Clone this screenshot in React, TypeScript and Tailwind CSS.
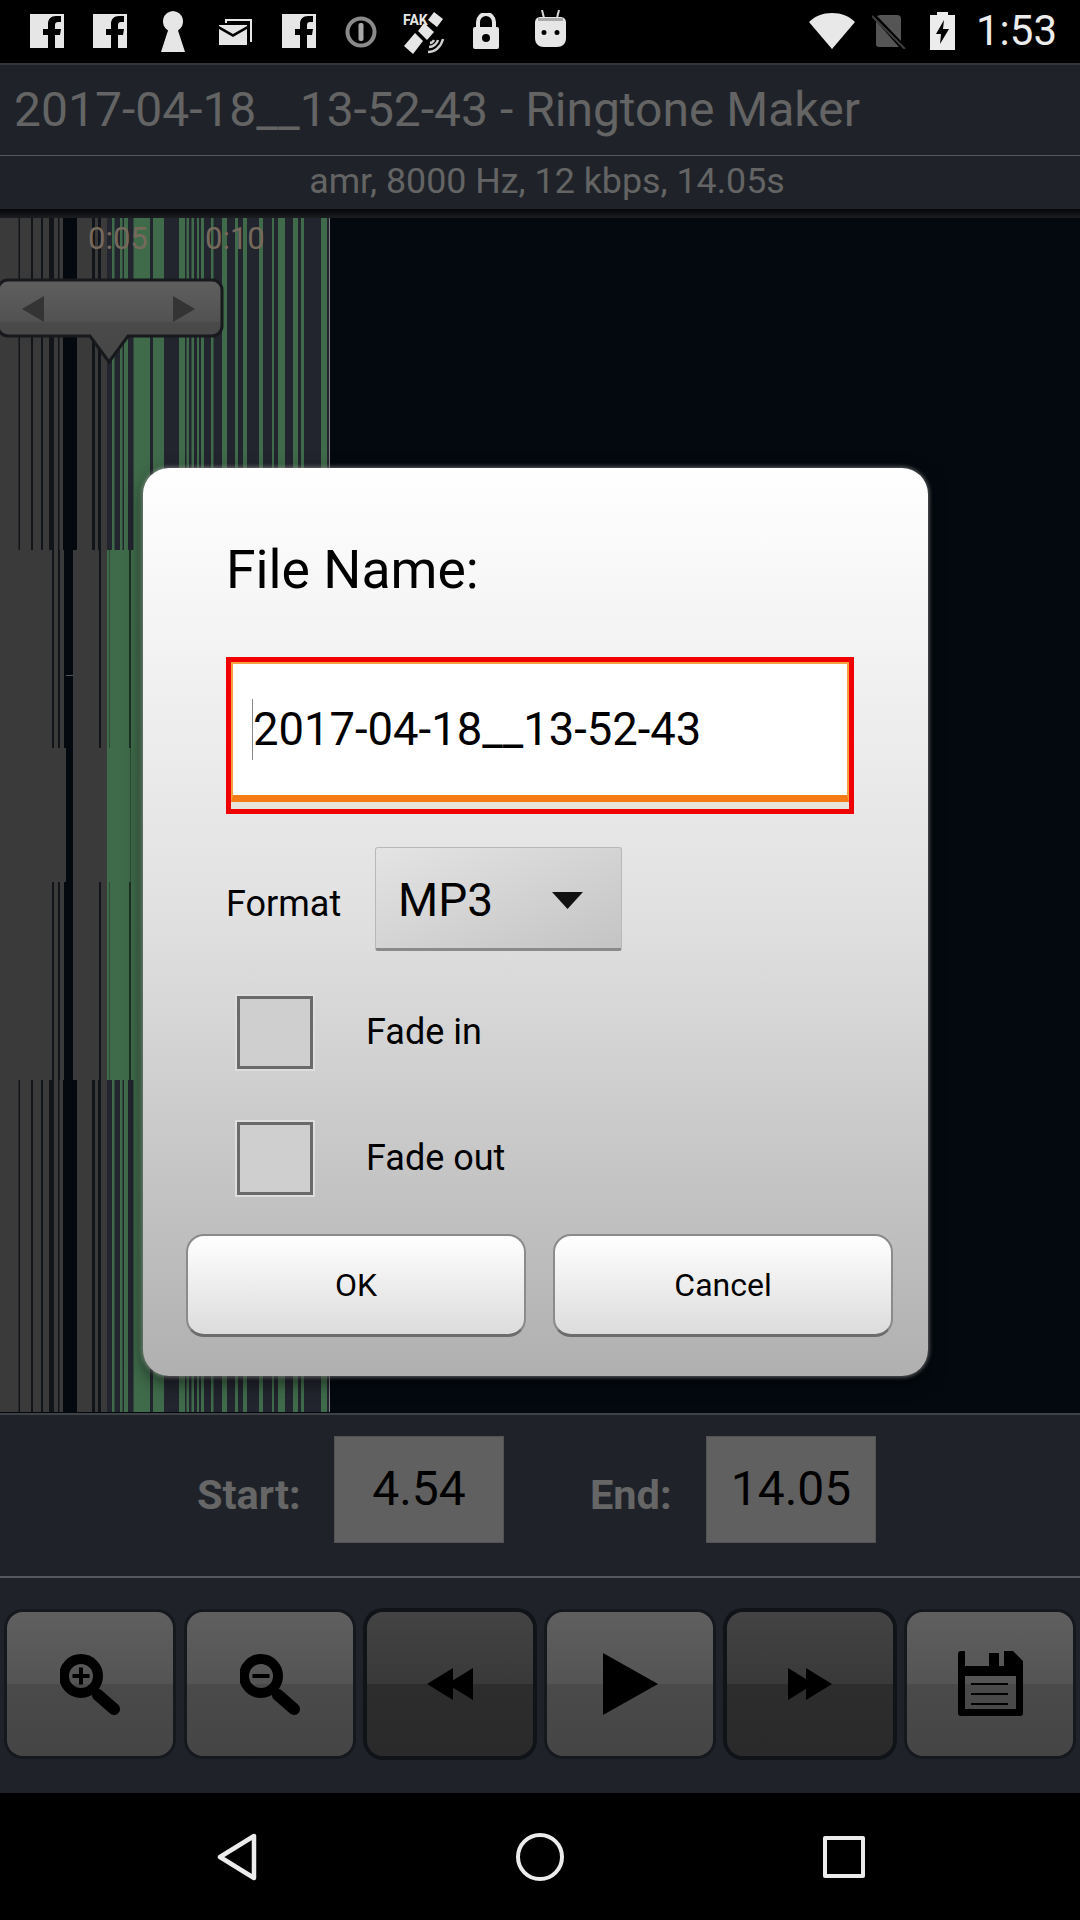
import React from 'react';

const GREY = '#3a3a3a';
const GREEN = '#3f6b4a';
const NAVY = '#22242e';
const DARK = '#111418';
const BLACK = '#03090f';

// x ranges of the wave form, in page pixels
const fullDark = [[18.5, 20], [31, 33], [41, 43], [49, 54], [58, 59.5], [92, 95], [98, 101]];
const fullGreen = [
  [112, 114.5], [120, 122.5], [124, 128], [133.5, 150], [153, 164], [179, 185], [186.5, 189],
  [191.5, 194], [197, 199], [201, 204], [211, 213.5], [222, 227], [235, 238], [243, 247],
  [259, 263], [272, 274], [278, 285], [293, 298], [301, 304], [321, 327],
];
const midDark = [[52, 54], [58, 60], [99, 101]];

const Waveform = () => (
  <svg width="330" height="1194" viewBox="0 0 330 1194" className="block">
    {/* loud top and bottom bands */}
    {[[0, 332], [862, 332]].map(([y, h]) => (
      <g key={y}>
        <rect x="0" y={y} width="107" height={h} fill={GREY} />
        <rect x="63" y={y} width="14" height={h} fill={BLACK} />
        {fullDark.map(([a, b]) => (
          <rect key={a} x={a} y={y} width={b - a} height={h} fill={DARK} />
        ))}
        <rect x="107" y={y} width="222" height={h} fill={NAVY} />
        {fullGreen.map(([a, b]) => (
          <rect key={a} x={a} y={y} width={b - a} height={h} fill={GREEN} />
        ))}
        <rect x="329" y={y} width="1" height={h} fill="#7d7d7d" />
      </g>
    ))}
    {/* quieter middle bands */}
    {[[332, 198], [664, 198]].map(([y, h]) => (
      <g key={y}>
        <rect x="0" y={y} width="107" height={h} fill={GREY} />
        <rect x="64" y={y} width="9" height={h} fill={BLACK} />
        {midDark.map(([a, b]) => (
          <rect key={a} x={a} y={y} width={b - a} height={h} fill={DARK} />
        ))}
        <rect x="107" y={y} width="40" height={h} fill={GREEN} />
        <rect x="109" y={y} width="1" height={h} fill="#2b4a35" />
        <rect x="129" y={y} width="2" height={h} fill="#1d2f24" />
      </g>
    ))}
    <rect x="0" y="530" width="107" height="134" fill={GREY} />
    <rect x="66" y="530" width="7" height="134" fill={BLACK} />
    <rect x="66" y="457" width="7" height="1" fill="#4a5a5a" />
    <rect x="107" y="530" width="40" height="134" fill={GREEN} />
    <rect x="130" y="530" width="1" height="134" fill="#2b4a35" />
  </svg>
);

const SeekHandle = () => (
  <svg width="226" height="86" viewBox="0 0 226 86" className="absolute left-0 top-[60px]">
    <defs>
      <linearGradient id="handle" x1="0" y1="0" x2="0" y2="1">
        <stop offset="0" stopColor="#5f5f5f" />
        <stop offset="0.5" stopColor="#525252" />
        <stop offset="0.52" stopColor="#4a4a4a" />
        <stop offset="1" stopColor="#464646" />
      </linearGradient>
    </defs>
    <path
      d="M8 2H212a10 10 0 0 1 10 10V48a10 10 0 0 1-10 10H128L109 84 90 58H8A10 10 0 0 1-2 48V12A10 10 0 0 1 8 2Z"
      fill="url(#handle)"
      stroke="#17191d"
      strokeWidth="3"
    />
    <path d="M44 18V44L22 31Z" fill="#343434" />
    <path d="M173 18V44L195 31Z" fill="#343434" />
  </svg>
);

const FbIcon = ({ className }: { className: string }) => (
  <svg width="34" height="34" viewBox="0 0 34 34" className={className}>
    <path d="M0 0H34V34H25V21H30L31 15H25V11C25 9 26 8 28 8H31V2H26C21 2 18 5 18 10V15H13V21H18V34H0Z" fill="#e6e6e6" />
  </svg>
);

const StatusIcons = () => (
  <div className="flex items-start">
    <FbIcon className="ml-[30px] mt-[14px]" />
    <FbIcon className="ml-[29px] mt-[14px]" />
    {/* keyhole */}
    <svg width="24" height="41" viewBox="0 0 24 41" className="ml-[34px] mt-[11px]">
      <path d="M12 0A10.5 10.5 0 0 1 17 19.5L24 41H0L7 19.5A10.5 10.5 0 0 1 12 0Z" fill="#e6e6e6" />
    </svg>
    {/* mail */}
    <svg width="34" height="28" viewBox="0 0 34 28" className="ml-[34px] mt-[18px]">
      <path d="M6 5V1H33V24H31V3H8V5Z" fill="#e6e6e6" />
      <path d="M0 7H28V8L14 16 0 8ZM0 11L14 19 28 11V27H0Z" fill="#e6e6e6" />
    </svg>
    <FbIcon className="ml-[29px] mt-[14px]" />
    {/* circled i */}
    <svg width="32" height="32" viewBox="0 0 32 32" className="ml-[29px] mt-[16px]">
      <circle cx="16" cy="16" r="13.5" fill="none" stroke="#8a8a8a" strokeWidth="4" />
      <rect x="13.5" y="7" width="5" height="18" rx="2" fill="#a8a8a8" />
    </svg>
    {/* fake gps satellite */}
    <div className="relative ml-[26px] mt-[11px] w-[43px] h-[44px]">
      <svg width="43" height="44" viewBox="0 0 43 44" className="absolute inset-0">
        <path d="M31 1L40 8 34 16 25 9Z" fill="#e6e6e6" />
        <path d="M21 12L31 21 24 29 15 20Z" fill="#e6e6e6" />
        <path d="M12 22L20 30 10 43 1 35Z" fill="#e6e6e6" />
        <path d="M25 41C32 41 38 36 40 28M26 36C30 36 34 33 35 29M27 32C29 32 30 31 31 29" fill="none" stroke="#cfcfcf" strokeWidth="2.4" />
      </svg>
      <span className="absolute left-0 top-[1px] text-[14px] leading-[16px] font-bold text-[#e6e6e6]">FAK</span>
    </div>
    {/* lock */}
    <svg width="26" height="36" viewBox="0 0 26 36" className="ml-[27px] mt-[13px]">
      <path d="M5 15V9A8 8 0 0 1 21 9V15" fill="none" stroke="#e6e6e6" strokeWidth="4" />
      <path fillRule="evenodd" d="M2 14H24A2 2 0 0 1 26 16V34A2 2 0 0 1 24 36H2A2 2 0 0 1 0 34V16A2 2 0 0 1 2 14ZM13 21A4 4 0 1 0 13 29 4 4 0 1 0 13 21Z" fill="#e6e6e6" />
    </svg>
    {/* android o */}
    <svg width="31" height="37" viewBox="0 0 31 37" className="ml-[36px] mt-[10px]">
      <path d="M7 0L9 8M24 0L22 8" stroke="#d8d8d8" strokeWidth="2" />
      <path fillRule="evenodd" d="M6 7H25C29 7 31 9 31 13V28C31 34 27 37 22 37H9C4 37 0 34 0 28V13C0 9 2 7 6 7ZM9 20A2.5 2.5 0 1 0 9 25 2.5 2.5 0 1 0 9 20ZM22 20A2.5 2.5 0 1 0 22 25 2.5 2.5 0 1 0 22 20Z" fill="#e6e6e6" />
      <rect x="3" y="8" width="25" height="3" fill="#a8a8a8" />
    </svg>
    <div className="ml-auto flex items-start">
      {/* wifi */}
      <svg width="46" height="36" viewBox="0 0 46 36" className="mt-[13px]">
        <path d="M23 36L0 9C6 3 14 0 23 0S40 3 46 9Z" fill="#e8e8e8" />
      </svg>
      {/* no sim */}
      <svg width="34" height="34" viewBox="0 0 34 34" className="ml-[17px] mt-[15px]">
        <path d="M8 0H25A4 4 0 0 1 29 4V26L5 1Z" fill="#555555" />
        <path d="M4 6L27 32H7A3 3 0 0 1 4 29Z" fill="#555555" />
        <path d="M0 1L33 34" stroke="#3f3f3f" strokeWidth="2" />
      </svg>
      {/* charging battery */}
      <svg width="25" height="38" viewBox="0 0 25 38" className="ml-[24px] mt-[12px]">
        <path fillRule="evenodd" d="M7 0H18V3H25V38H0V3H7ZM14 8L6 22H11L10 32 19 17H13Z" fill="#ececec" />
      </svg>
      <span className="ml-[21px] mr-[23px] mt-[6px] text-[42px] leading-[50px] font-normal text-[#ececec]">1:53</span>
    </div>
  </div>
);

const Checkbox = () => (
  <div className="w-[80px] h-[77px] ml-[7px] border-2 border-[#dedede] bg-[#cfcfcf] shrink-0">
    <div className="w-full h-full border-[3px] border-[#6a6a6a]" />
  </div>
);

const Dialog = () => (
  <div className="absolute left-[143px] top-[468px] w-[785px] h-[908px] rounded-[26px] bg-linear-to-b from-[#ffffff] via-[#e0e0e0] to-[#b0b0b0] shadow-[0_0_4px_1px_rgba(170,170,170,0.6),0_6px_18px_rgba(0,0,0,0.6)] text-black flex flex-col">
    <div className="ml-[83px] mt-[72px] text-[53.5px] leading-[60px]">File Name:</div>
    {/* focused text field */}
    <div className="ml-[83px] mt-[57px] w-[628px] h-[157px] border-[5px] border-[#f00000] bg-[#e8e4dc] shrink-0">
      <div className="h-[140px] bg-white border-t-2 border-x-2 border-[#f5a040] border-b-[7px] border-b-[#f57c14] flex items-center">
        <div className="ml-[19px] w-[1px] h-[61px] bg-[#8a8a8a] shrink-0" />
        <span className="text-[45.4px] leading-[60px]">2017-04-18__13-52-43</span>
      </div>
    </div>
    <div className="flex items-center ml-[83px] mt-[33px]">
      <span className="w-[112px] text-[36px] leading-[44px] mt-[10px] mr-[37px]">Format</span>
      <div className="w-[247px] h-[104px] flex items-center justify-between pl-[22px] pr-[38px] rounded-[3px] border border-[#b8b8b8] border-b-[3px] border-b-[#8a8a8a] bg-linear-to-br from-[#e4e4e4] to-[#c4c4c4]">
        <span className="text-[46px] leading-[56px] mt-[4px]">MP3</span>
        <svg width="31" height="17" viewBox="0 0 31 17" className="mt-[4px]">
          <path d="M0 0H31L15.5 17Z" fill="#111" />
        </svg>
      </div>
    </div>
    <div className="flex items-center ml-[85px] mt-[43px]">
      <Checkbox />
      <span className="ml-[51px] text-[36px] leading-[44px] -mt-[2px]">Fade in</span>
    </div>
    <div className="flex items-center ml-[85px] mt-[49px]">
      <Checkbox />
      <span className="ml-[51px] text-[36px] leading-[44px] -mt-[2px]">Fade out</span>
    </div>
    <div className="flex ml-[43px] mt-[37px] gap-[27px]">
      {['OK', 'Cancel'].map((label) => (
        <button
          key={label}
          className="w-[340px] h-[103px] rounded-[18px] border-2 border-[#8b8b8b] border-b-[3px] border-b-[#6c6c6c] bg-linear-to-b from-[#ffffff] to-[#dcdcdc] text-[32px] text-black"
        >
          {label}
        </button>
      ))}
    </div>
  </div>
);

const ZoomIcon = ({ minus }: { minus?: boolean }) => (
  <svg width="60" height="64" viewBox="0 0 60 64">
    <circle cx="21" cy="24" r="17" fill="none" stroke="#000" strokeWidth="10" />
    <path d="M32 35L39 43" stroke="#000" strokeWidth="5" />
    <path d="M38 43L54 57" stroke="#000" strokeWidth="12" strokeLinecap="round" />
    <path d={minus ? 'M12.5 24H29.5' : 'M12.5 24H29.5M21 15.5V32.5'} stroke="#000" strokeWidth="4" />
  </svg>
);

const transport = [
  { id: 'in', dark: false, icon: <ZoomIcon /> },
  { id: 'out', dark: false, icon: <ZoomIcon minus /> },
  {
    id: 'rew',
    dark: true,
    icon: (
      <svg width="46" height="32" viewBox="0 0 46 32">
        <path d="M0 16L26 0V32ZM20 16L46 0V32Z" fill="#000" />
      </svg>
    ),
  },
  {
    id: 'play',
    dark: false,
    icon: (
      <svg width="55" height="62" viewBox="0 0 55 62">
        <path d="M0 0L55 31 0 62Z" fill="#000" />
      </svg>
    ),
  },
  {
    id: 'ff',
    dark: true,
    icon: (
      <svg width="44" height="32" viewBox="0 0 44 32">
        <path d="M0 0L26 16 0 32ZM18 0L44 16 18 32Z" fill="#000" />
      </svg>
    ),
  },
  {
    id: 'save',
    dark: false,
    icon: (
      <svg width="65" height="66" viewBox="0 0 65 66">
        <path
          fillRule="evenodd"
          d="M3 0H7V15H31V2H41V15H46V0H55L65 10V62A3 3 0 0 1 62 65H3A3 3 0 0 1 0 62V3A3 3 0 0 1 3 0ZM7 25V58H58V25Z"
          fill="#000"
        />
        <path d="M13 33H50M13 43H50M13 53H50" stroke="#000" strokeWidth="2" />
      </svg>
    ),
  },
];

export default function App() {
  return (
    <div className="relative w-[1080px] h-[1920px] overflow-hidden bg-black flex flex-col font-['Roboto',sans-serif]">
      <div className="h-[63px] shrink-0">
        <StatusIcons />
      </div>

      {/* title */}
      <div className="h-[93px] shrink-0 bg-[#1f2329] border-t-2 border-t-[#33363b] border-b border-b-[#55585c] pl-[14px] flex items-center">
        <span className="text-[48px] leading-[56px] text-[#646464]">2017-04-18__13-52-43 - Ringtone Maker</span>
      </div>
      <div className="h-[53px] shrink-0 bg-[#1f2329] flex items-center justify-center pb-[4px] pl-[14px]">
        <span className="text-[35.8px] leading-[40px] text-[#646464]">amr, 8000 Hz, 12 kbps, 14.05s</span>
      </div>
      <div className="h-[9px] shrink-0 bg-linear-to-b from-[#050608] to-[#1c1e22]" />

      {/* wave form */}
      <div className="relative h-[1195px] shrink-0 bg-[#03090f]">
        <Waveform />
        <span className="absolute left-[88px] top-[3px] text-[31px] leading-[36px] text-[#76695c]">0:05</span>
        <span className="absolute left-[205px] top-[3px] text-[31px] leading-[36px] text-[#76695c]">0:10</span>
        <SeekHandle />
      </div>

      {/* start and end */}
      <div className="h-[165px] shrink-0 bg-[#1f2329] border-t-2 border-t-[#3e4146] border-b-2 border-b-[#55585c] flex items-center pl-[197px] pb-[12px]">
        <span className="w-[137px] text-[41.5px] leading-[44px] font-bold text-[#666666] mt-[10px]">Start:</span>
        <div className="w-[170px] h-[107px] bg-[#606060] border border-[#535353] flex items-center justify-center text-[48px] text-black pb-[2px]">4.54</div>
        <span className="ml-[86px] w-[116px] text-[41.5px] leading-[44px] font-bold text-[#666666] mt-[10px]">End:</span>
        <div className="w-[170px] h-[107px] bg-[#606060] border border-[#535353] flex items-center justify-center text-[48px] text-black pb-[2px]">14.05</div>
      </div>

      {/* transport buttons */}
      <div className="h-[215px] shrink-0 bg-[#1f2329] flex justify-between items-start px-[7px] pt-[34px]">
        {transport.map((b) => (
          <button
            key={b.id}
            className={
              b.dark
                ? 'w-[166px] h-[144px] rounded-[16px] flex items-center justify-center bg-[linear-gradient(#434343,#393939_50%,#2d2d2d_50%,#2a2a2a)] shadow-[0_0_0_4px_#101317]'
                : 'w-[166px] h-[144px] rounded-[16px] flex items-center justify-center bg-[linear-gradient(#5f5f5f,#545454_50%,#4a4a4a_50%,#454545)] shadow-[0_0_0_3px_#15181c]'
            }
          >
            {b.icon}
          </button>
        ))}
      </div>

      {/* navigation bar */}
      <div className="flex-1 bg-black flex items-center">
        <svg width="42" height="50" viewBox="0 0 42 50" className="ml-[216px]">
          <path d="M38 4V46L4 25Z" fill="none" stroke="#ececec" strokeWidth="4.5" strokeLinejoin="round" />
        </svg>
        <div className="ml-[258px] w-[48px] h-[48px] rounded-full border-[4.5px] border-[#ececec]" />
        <div className="ml-[259px] w-[42px] h-[42px] rounded-[2px] border-[4.5px] border-[#ececec]" />
      </div>

      <Dialog />
    </div>
  );
}
